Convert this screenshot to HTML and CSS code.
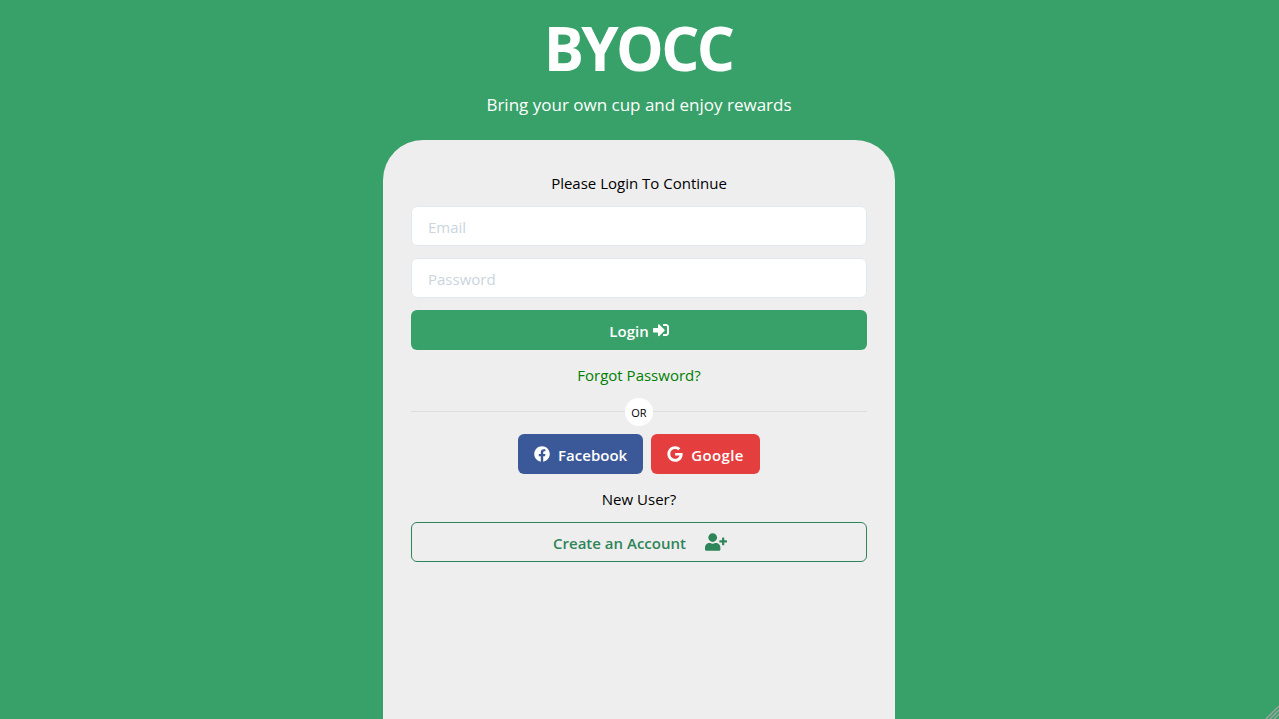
FILE: index.html
```html
<!DOCTYPE html>
<html lang="en">
<head>
    <meta charset="UTF-8">
    <meta name="viewport" content="width=device-width, initial-scale=1.0">
    <title>BYOCC</title>
    <link rel="stylesheet" href="styles.css">
</head>
<body>

<header class="brand">
    <h1>BYOCC</h1>
    <p>Bring your own cup and enjoy rewards</p>
</header>

<main class="card">
    <form class="login-form">
        <p class="intro">Please Login To Continue</p>
        <input type="email" class="field" placeholder="Email">
        <input type="password" class="field" placeholder="Password">
        <button type="button" class="btn btn-login">
            Login
            <svg class="icon" viewBox="0 0 512 512"><path d="M416 448h-84c-6.6 0-12-5.4-12-12v-40c0-6.6 5.4-12 12-12h84c17.7 0 32-14.3 32-32V160c0-17.7-14.3-32-32-32h-84c-6.6 0-12-5.4-12-12V76c0-6.6 5.4-12 12-12h84c53 0 96 43 96 96v192c0 53-43 96-96 96zm-47-201L201 79c-15-15-41-4.5-41 17v96H24c-13.3 0-24 10.7-24 24v96c0 13.3 10.7 24 24 24h136v96c0 21.5 26 32 41 17l168-168c9.3-9.4 9.3-24.6 0-34z"/></svg>
        </button>
        <a class="forgot" href="#">Forgot Password?</a>
        <div class="divider"><span>OR</span></div>
        <div class="socials">
            <button type="button" class="btn btn-facebook">
                <svg class="icon" viewBox="0 0 512 512"><path d="M504 256C504 119 393 8 256 8S8 119 8 256c0 123.78 90.69 226.38 209.25 245V327.69h-63V256h63v-54.64c0-62.15 37-96.48 93.67-96.48 27.14 0 55.52 4.84 55.52 4.84v61h-31.28c-30.8 0-40.41 19.12-40.41 38.73V256h68.78l-11 71.69h-57.78V501C413.31 482.38 504 379.78 504 256z"/></svg>
                Facebook
            </button>
            <button type="button" class="btn btn-google">
                <svg class="icon" viewBox="0 0 488 512"><path d="M488 261.8C488 403.3 391.1 504 248 504 110.8 504 0 393.2 0 256S110.8 8 248 8c66.8 0 123 24.5 166.3 64.9l-67.5 64.9C258.5 52.6 94.3 116.6 94.3 256c0 86.5 69.1 156.6 153.7 156.6 98.2 0 135-70.4 140.8-106.9H248v-85.3h236.1c2.3 12.7 3.9 24.9 3.9 41.4z"/></svg>
                Google
            </button>
        </div>
        <p class="new-user">New User?</p>
        <button type="button" class="btn btn-create">
            Create an Account
            <svg class="icon icon-user" viewBox="0 0 640 512"><path d="M624 208h-64v-64c0-8.8-7.2-16-16-16h-32c-8.8 0-16 7.2-16 16v64h-64c-8.8 0-16 7.2-16 16v32c0 8.8 7.2 16 16 16h64v64c0 8.8 7.2 16 16 16h32c8.8 0 16-7.2 16-16v-64h64c8.8 0 16-7.2 16-16v-32c0-8.8-7.2-16-16-16zm-400 48c70.7 0 128-57.3 128-128S294.7 0 224 0 96 57.3 96 128s57.3 128 128 128zm89.6 32h-16.7c-22.2 10.2-46.9 16-72.9 16s-50.6-5.8-72.9-16h-16.7C60.2 288 0 348.2 0 422.4V464c0 26.5 21.5 48 48 48h352c26.5 0 48-21.5 48-48v-41.6c0-74.2-60.2-134.4-134.4-134.4z"/></svg>
        </button>
    </form>
</main>

<!-- window resize handle in the corner -->
<svg class="resize-grip" viewBox="0 0 14 14">
    <path d="M14 1 1 14M14 5 5 14M14 9 9 14"/>
</svg>

</body>
</html>
```

FILE: styles.css
```css
* {
    box-sizing: border-box;
}
html, body {
    height: 100%;
}
body {
    margin: 0;
    padding-right: 1px; /* card sits on 383, not 384 */
    overflow: hidden;
    background: #38a169;
    font-family: 'Open Sans', sans-serif;
    font-size: 15px;
    color: #000;
    display: flex;
    flex-direction: column;
    align-items: center;
}
.brand {
    flex: none;
    height: 140px;
    padding-top: 12px;
    text-align: center;
    color: #fff;
}
.brand h1 {
    margin: 0;
    padding-right: 2px;
    font-size: 60px;
    line-height: 72px;
    font-weight: 700;
    letter-spacing: -2.7px;
}
.brand p {
    margin: 9px 0 0;
    font-size: 17px;
    line-height: 24px;
}
.card {
    flex: 1;
    width: 512px;
    padding: 31px 28px 0;
    background: #eee;
    border-radius: 40px 40px 0 0;
}
.login-form {
    display: flex;
    flex-direction: column;
    align-items: stretch;
}
.intro, .new-user {
    margin: 0;
    text-align: center;
    line-height: 24px;
}
.field {
    height: 40px;
    margin-top: 12px;
    padding: 2px 16px 0;
    border: 1px solid #e2e8f0;
    border-radius: 6px;
    background: #fff;
    font-family: inherit;
    font-size: 15px;
}
.intro + .field {
    margin-top: 11px;
}
.field::placeholder {
    color: #cbd5e0;
    opacity: 1;
}
.btn {
    height: 40px;
    padding-top: 2px;
    border: none;
    border-radius: 6px;
    font-family: inherit;
    font-size: 15px;
    font-weight: 600;
    color: #fff;
    display: flex;
    align-items: center;
    justify-content: center;
    cursor: pointer;
}
.icon {
    width: 16px;
    height: 16px;
    margin-top: -2px;
    fill: currentColor;
}
.btn-login {
    margin-top: 12px;
    background: #38a169;
    gap: 4px;
}
.forgot {
    margin-top: 13px;
    text-align: center;
    line-height: 24px;
    color: green;
    text-decoration: none;
}
.divider {
    height: 1px;
    margin: 24px 0 22px;
    background: #ddd;
    display: flex;
    justify-content: center;
    align-items: center;
}
.divider span {
    width: 28px;
    height: 28px;
    padding-top: 2px;
    border-radius: 50%;
    background: #fff;
    font-size: 11px;
    display: flex;
    justify-content: center;
    align-items: center;
}
.socials {
    display: flex;
    justify-content: center;
    gap: 8px;
}
.btn-facebook, .btn-google {
    gap: 8px;
    padding: 2px 16px 0;
}
.btn-facebook {
    background: #3b5998;
}
.btn-google {
    background: #e53e3e;
    letter-spacing: 0.4px;
}
.new-user {
    margin-top: 13px;
}
.btn-create {
    margin-top: 11px;
    padding-left: 8px;
    background: transparent;
    border: 1px solid #2f855a;
    color: #2f855a;
    gap: 19px;
}
.icon-user {
    width: 22px;
    height: 18px;
}
.resize-grip {
    position: fixed;
    right: 0;
    bottom: 0;
    width: 14px;
    height: 14px;
    fill: none;
    stroke: #9aa39e;
    stroke-width: 1.5;
}
```
